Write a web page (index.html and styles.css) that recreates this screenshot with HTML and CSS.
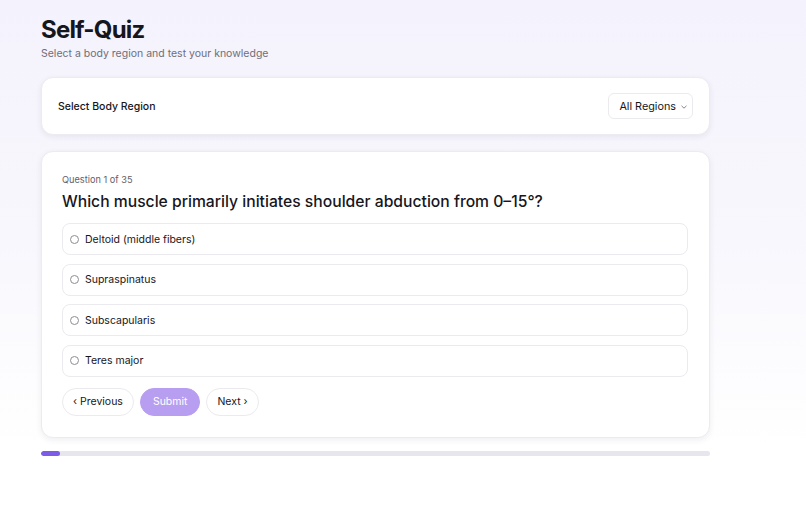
FILE: index.html
```html
<!DOCTYPE html>
<html lang="en">
<head>
<meta charset="utf-8">
<title>Self-Quiz</title>
<link rel="stylesheet" href="styles.css">
</head>
<body>
<main class="page">
  <header class="head">
    <h1 class="title">Self-Quiz</h1>
    <p class="subtitle">Select a body region and test your knowledge</p>
  </header>

  <section class="card region-card">
    <span class="region-label">Select Body Region</span>
    <div class="select">
      <span>All Regions</span>
      <svg class="chev" width="8" height="8" viewBox="0 0 8 8"><path d="M1.5 2.8 L4 5.2 L6.5 2.8" fill="none" stroke="#888" stroke-width="1"/></svg>
    </div>
  </section>

  <section class="card quiz-card">
    <p class="counter">Question 1 of 35</p>
    <h2 class="question">Which muscle primarily initiates shoulder abduction from 0–15°?</h2>
    <div class="options">
      <label class="option"><span class="radio"></span>Deltoid (middle fibers)</label>
      <label class="option"><span class="radio"></span>Supraspinatus</label>
      <label class="option"><span class="radio"></span>Subscapularis</label>
      <label class="option"><span class="radio"></span>Teres major</label>
    </div>
    <div class="actions">
      <button class="btn">‹ Previous</button>
      <button class="btn btn-primary">Submit</button>
      <button class="btn">Next ›</button>
    </div>
  </section>

  <div class="progress"><div class="progress-fill" style="width: 2.86%"></div></div>
</main>
</body>
</html>
```

FILE: styles.css
```css
* { box-sizing: border-box; }
html, body { margin: 0; padding: 0; }
body {
  font-family: Inter, "Noto Sans", sans-serif;
  color: #16161d;
  background: linear-gradient(180deg, #f4f2fc 0%, #f8f7fd 45%, #ffffff 85%);
  min-height: 528px;
}
.page {
  width: 669px;
  margin-left: 41px;
  padding-top: 15px;
}
.title {
  margin: 0;
  font-size: 24px;
  font-weight: 700;
  letter-spacing: -0.8px;
  line-height: 30px;
}
.subtitle {
  margin: 1px 0 0;
  font-size: 10.5px;
  color: #6e6e7a;
  line-height: 15px;
}
.card {
  background: #fff;
  border: 1px solid #ecebf1;
  border-radius: 12px;
  box-shadow: 0 2px 6px rgba(30, 20, 60, 0.07);
}
.region-card {
  margin-top: 16px;
  height: 58px;
  padding: 0 16px;
  display: flex;
  align-items: center;
  justify-content: space-between;
}
.region-label {
  font-size: 10.5px;
  font-weight: 500;
}
.select {
  height: 26px;
  border: 1px solid #ebebef;
  border-radius: 6px;
  display: flex;
  align-items: center;
  gap: 4px;
  padding: 0 4px 0 10px;
  font-size: 10.8px;
  white-space: nowrap;
}
.chev { margin-top: 1px; }
.quiz-card {
  margin-top: 16px;
  padding: 21px 21px 21px 20px;
}
.counter {
  margin: 0;
  font-size: 9.2px;
  color: #5f5f6a;
  line-height: 14px;
}
.question {
  margin: 4px 0 0;
  font-size: 15.7px;
  font-weight: 500;
  line-height: 22px;
}
.options {
  margin-top: 10px;
  display: flex;
  flex-direction: column;
  gap: 8.5px;
}
.option {
  height: 32px;
  border: 1px solid #ebebef;
  border-radius: 8px;
  display: flex;
  align-items: center;
  padding-left: 7px;
  font-size: 10.5px;
  gap: 6px;
}
.radio {
  width: 9px;
  height: 9px;
  border: 1px solid #8c8c94;
  border-radius: 50%;
  flex: none;
}
.actions {
  margin-top: 11px;
  display: flex;
  gap: 6px;
}
.btn {
  font-family: inherit;
  font-size: 10.5px;
  height: 28px;
  padding: 0 10px;
  border-radius: 14px;
  border: 1px solid #ebebef;
  background: #fff;
  color: #16161d;
}
.btn-primary {
  background: #b89ef0;
  border-color: #b89ef0;
  color: #fff;
  padding: 0 12px;
}
.progress {
  margin-top: 13px;
  height: 5px;
  border-radius: 3px;
  background: #e6e6ec;
  overflow: hidden;
}
.progress-fill {
  height: 100%;
  background: #7c5ce6;
  border-radius: 3px;
}
```
